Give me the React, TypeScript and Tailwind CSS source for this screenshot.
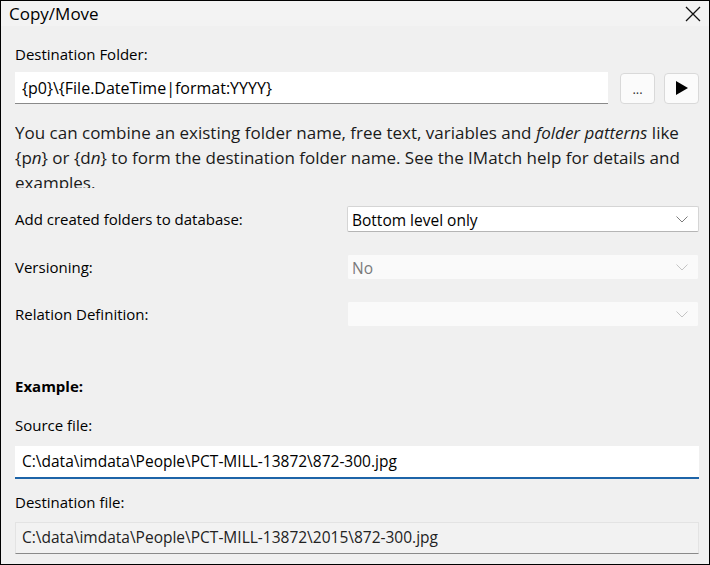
import React from "react";

const font = { fontFamily: '"Open Sans", "Noto Sans", sans-serif' };

function Chevron({ color }: { color: string }) {
  return (
    <svg width="12" height="7" viewBox="0 0 12 7" className="shrink-0">
      <path d="M0.5 0.5 L6 6 L11.5 0.5" fill="none" stroke={color} strokeWidth="1" />
    </svg>
  );
}

function Select({ value, disabled }: { value: string; disabled?: boolean }) {
  return (
    <div
      className={
        "w-[352px] h-[26px] flex items-center justify-between pl-[4px] pr-[10px] rounded-[2px] " +
        (disabled
          ? "bg-[#fafafa] border border-[#f0f0f0] text-[#7a7a7a]"
          : "bg-white border border-[#d5d5d5] border-b-[#b5b5b5] text-black")
      }
    >
      <span className="text-[15.5px] leading-[20px] pt-[2px]">{value}</span>
      <Chevron color={disabled ? "#c4c4c4" : "#7c7c7c"} />
    </div>
  );
}

export default function App() {
  return (
    <div
      style={font}
      className="w-[710px] h-[565px] border border-black bg-[#f0f0f0] text-black flex flex-col overflow-hidden"
    >
      <div className="h-[25px] flex items-center justify-between pl-[8px] pr-[8px] bg-[#f3f3f3]">
        <span className="text-[17px] leading-none">Copy/Move</span>
        <svg width="16" height="16" viewBox="0 0 16 16" className="mt-[1px]">
          <path d="M1 1 L15 15 M15 1 L1 15" stroke="#111" strokeWidth="1.3" />
        </svg>
      </div>
      <div className="flex flex-col pl-[14px] pr-[10px]">
        <div className="mt-[17px] h-[22px] flex items-center text-[15px]">Destination Folder:</div>
        <div className="mt-[7px] flex items-center">
          <div className="w-[593px] h-[32px] bg-white border-b border-[#8a8a8a] flex items-center pl-[7px] text-[16px]">
            {"{p0}\\{File.DateTime|format:YYYY}"}
          </div>
          <div className="ml-[12px] w-[35px] h-[31px] rounded-[4px] border border-[#d9d9d9] bg-[#fbfbfb] flex items-end justify-center pb-[7px]">
            <span className="text-[13px] leading-none text-[#333]">...</span>
          </div>
          <div className="ml-[9px] w-[35px] h-[31px] rounded-[4px] border border-[#d9d9d9] bg-[#fbfbfb] flex items-center justify-center">
            <svg width="12" height="14" viewBox="0 0 12 14">
              <path d="M0 0 L12 7 L0 14 Z" fill="#000" />
            </svg>
          </div>
        </div>
        <div className="mt-[16px] h-[68px] overflow-hidden text-[17px] leading-[25px] text-[#1a1a1a]">
          You can combine an existing folder name, free text, variables and{" "}
          <i>folder patterns</i> like {"{p"}<i>n</i>{"}"} or {"{d"}<i>n</i>{"}"} to form the destination folder name. See the IMatch help for details and examples.
        </div>
        <div className="mt-[18px] flex items-center justify-between">
          <span className="text-[15px]">Add created folders to database:</span>
          <Select value="Bottom level only" />
        </div>
        <div className="mt-[22px] flex items-center justify-between">
          <span className="text-[15px]">Versioning:</span>
          <Select value="No" disabled />
        </div>
        <div className="mt-[21px] flex items-center justify-between">
          <span className="text-[15px]">Relation Definition:</span>
          <Select value="" disabled />
        </div>
        <div className="mt-[48px] h-[22px] flex items-center text-[15px] font-bold">Example:</div>
        <div className="mt-[17px] h-[22px] flex items-center text-[15px]">Source file:</div>
        <div className="mt-[10px] h-[33px] bg-white border-b-2 border-[#1d64a8] flex items-center pl-[7px] text-[15.5px]">
          C:\data\imdata\People\PCT-MILL-13872\872-300.jpg
        </div>
        <div className="mt-[12px] h-[22px] flex items-center text-[15px]">Destination file:</div>
        <div className="mt-[9px] h-[32px] bg-[#f2f2f2] border border-[#e3e3e3] border-b-[#8a8a8a] flex items-center pl-[6px] text-[15.5px] text-[#222]">
          C:\data\imdata\People\PCT-MILL-13872\2015\872-300.jpg
        </div>
      </div>
    </div>
  );
}
